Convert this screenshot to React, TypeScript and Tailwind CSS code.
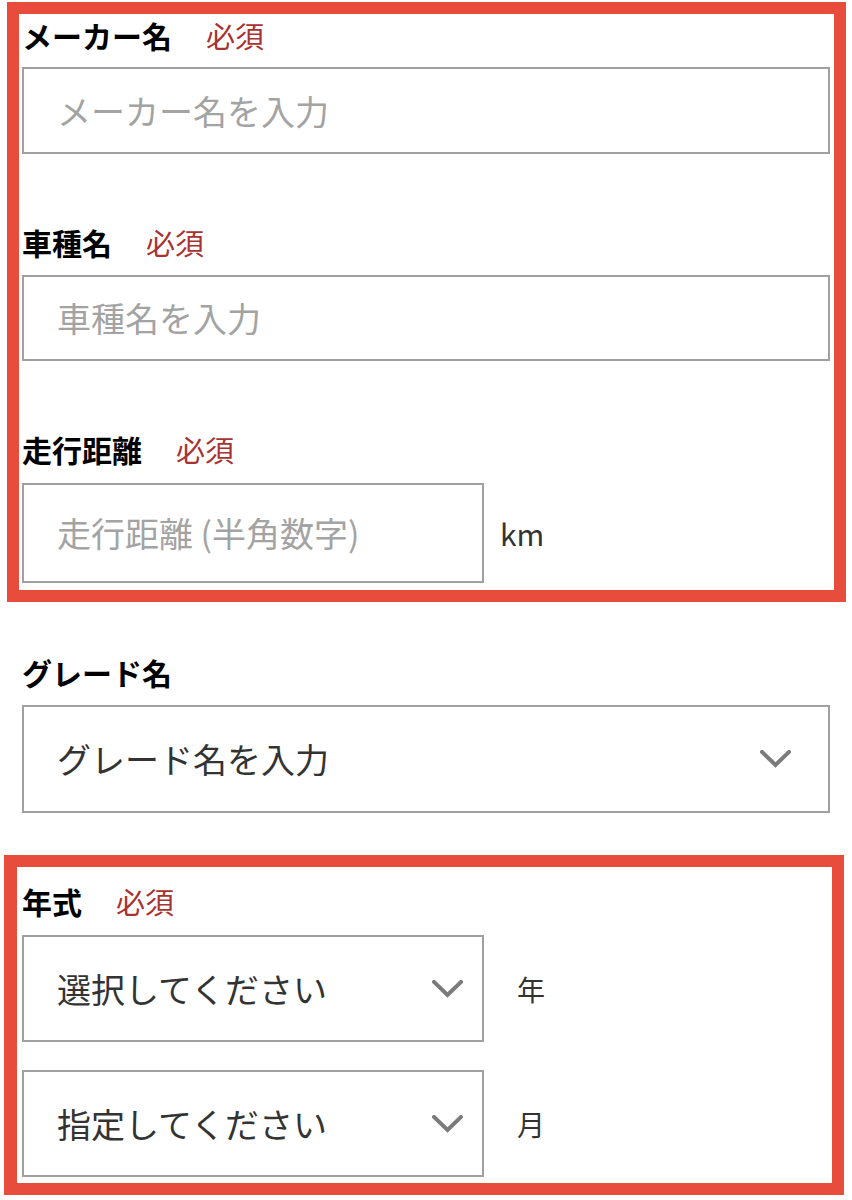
import type { ReactNode } from "react";

const font = { fontFamily: '"Noto Sans CJK JP", "Noto Sans", sans-serif' };

function Label({ text, required }: { text: string; required?: boolean }) {
  return (
    <div className="flex h-[40px] items-center">
      <span className="text-[30px] font-bold leading-none text-black">{text}</span>
      {required && <span className="ml-[34px] text-[29px] leading-none text-[#a83232]">必須</span>}
    </div>
  );
}

function Chevron() {
  return (
    <svg width="31" height="18" viewBox="0 0 31 18" fill="none" className="shrink-0">
      <polyline points="2,2 15.5,15 29,2" stroke="#7b7b7b" strokeWidth="4" strokeLinecap="square" />
    </svg>
  );
}

function Box({ className, children }: { className: string; children: ReactNode }) {
  return <div className={`flex items-center border-2 border-[#a0a0a0] bg-white ${className}`}>{children}</div>;
}

function Placeholder({ text }: { text: string }) {
  return <span className="pl-[33px] text-[34px] leading-none text-[#a3a3a3]">{text}</span>;
}

function SelectText({ text }: { text: string }) {
  return <span className="flex-1 pl-[33px] text-[34px] leading-none text-[#333]">{text}</span>;
}

export default function App() {
  return (
    <div className="min-h-[1200px] bg-white pt-[2px]" style={font}>
      {/* required group 1 */}
      <div className="ml-[7px] w-[839px] border-[12px] border-[#e74c3c] pb-[7px] pl-[3px] pr-[4px] pt-[1px]">
        <Label text="メーカー名" required />
        <Box className="mt-[12px] h-[87px] w-full">
          <Placeholder text="メーカー名を入力" />
        </Box>

        <div className="mt-[68px]">
          <Label text="車種名" required />
        </div>
        <Box className="mt-[13px] h-[86px] w-full">
          <Placeholder text="車種名を入力" />
        </Box>

        <div className="mt-[68px]">
          <Label text="走行距離" required />
        </div>
        <div className="mt-[14px] flex items-center">
          <Box className="h-[100px] w-[462px]">
            <Placeholder text="走行距離 (半角数字)" />
          </Box>
          <span className="ml-[16px] text-[30px] leading-none text-[#333]">km</span>
        </div>
      </div>

      {/* optional grade */}
      <div className="ml-[22px] mt-[50px]">
        <Label text="グレード名" />
        <Box className="mt-[13px] h-[108px] w-[808px] pr-[37px]">
          <SelectText text="グレード名を入力" />
          <Chevron />
        </Box>
      </div>

      {/* required group 2 */}
      <div className="ml-[4px] mt-[42px] w-[840px] border-y-[12px] border-l-[13px] border-r-[12px] border-[#e74c3c] pb-[6px] pl-[5px] pt-[14px]">
        <Label text="年式" required />
        <div className="mt-[14px] flex items-center">
          <Box className="h-[107px] w-[462px] pr-[19px]">
            <SelectText text="選択してください" />
            <Chevron />
          </Box>
          <span className="ml-[33px] text-[28px] leading-none text-[#333]">年</span>
        </div>
        <div className="mt-[28px] flex items-center">
          <Box className="h-[107px] w-[462px] pr-[19px]">
            <SelectText text="指定してください" />
            <Chevron />
          </Box>
          <span className="ml-[33px] text-[28px] leading-none text-[#333]">月</span>
        </div>
      </div>
    </div>
  );
}
